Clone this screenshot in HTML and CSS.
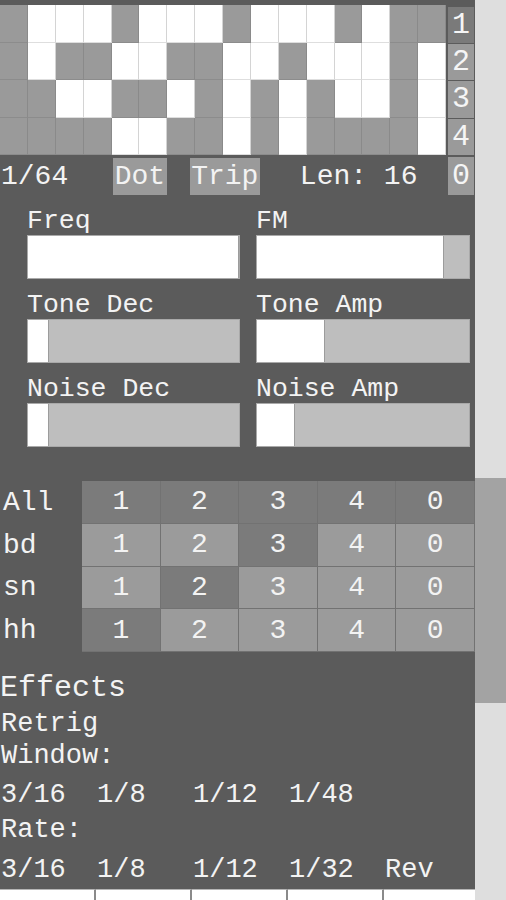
FILE: index.html
```html
<!DOCTYPE html>
<html lang="en">
<head>
<meta charset="utf-8">
<title>Drum Sequencer</title>
<link rel="stylesheet" href="styles.css">
</head>
<body>
<div class="app">
  <main class="page">
    <section class="seq">
      <div class="steps">
        <div class="c"></div><div class="c on"></div><div class="c on"></div><div class="c on"></div><div class="c"></div><div class="c on"></div><div class="c on"></div><div class="c on"></div><div class="c"></div><div class="c on"></div><div class="c on"></div><div class="c on"></div><div class="c"></div><div class="c on"></div><div class="c"></div><div class="c"></div>
        <div class="c"></div><div class="c on"></div><div class="c"></div><div class="c"></div><div class="c on"></div><div class="c on"></div><div class="c"></div><div class="c"></div><div class="c on"></div><div class="c on"></div><div class="c"></div><div class="c on"></div><div class="c on"></div><div class="c on"></div><div class="c"></div><div class="c on"></div>
        <div class="c"></div><div class="c"></div><div class="c on"></div><div class="c on"></div><div class="c"></div><div class="c"></div><div class="c on"></div><div class="c"></div><div class="c on"></div><div class="c"></div><div class="c on"></div><div class="c"></div><div class="c on"></div><div class="c on"></div><div class="c"></div><div class="c on"></div>
        <div class="c"></div><div class="c"></div><div class="c"></div><div class="c"></div><div class="c on"></div><div class="c on"></div><div class="c"></div><div class="c"></div><div class="c on"></div><div class="c"></div><div class="c on"></div><div class="c"></div><div class="c"></div><div class="c"></div><div class="c"></div><div class="c on"></div>
      </div>
      <div class="tracks">
        <div class="tn sel">1</div>
        <div class="tn">2</div>
        <div class="tn">3</div>
        <div class="tn">4</div>
      </div>
    </section>

    <div class="toolbar">
      <div class="tb-main">
        <span class="tb-text res">1/64</span>
        <span class="btn dot">Dot</span>
        <span class="btn trip">Trip</span>
        <span class="tb-text len">Len: 16</span>
      </div>
      <div class="tb-num"><span class="tn">0</span></div>
    </div>

    <section class="sliders">
      <div class="slider">
        <div class="s-label">Freq</div>
        <div class="s-box"><div class="s-fill" style="width:100%"></div></div>
      </div>
      <div class="slider">
        <div class="s-label">FM</div>
        <div class="s-box"><div class="s-fill" style="width:88%"></div></div>
      </div>
      <div class="slider">
        <div class="s-label">Tone Dec</div>
        <div class="s-box"><div class="s-fill" style="width:10%"></div></div>
      </div>
      <div class="slider">
        <div class="s-label">Tone Amp</div>
        <div class="s-box"><div class="s-fill" style="width:32%"></div></div>
      </div>
      <div class="slider">
        <div class="s-label">Noise Dec</div>
        <div class="s-box"><div class="s-fill" style="width:10%"></div></div>
      </div>
      <div class="slider">
        <div class="s-label">Noise Amp</div>
        <div class="s-box"><div class="s-fill" style="width:18%"></div></div>
      </div>
    </section>

    <section class="mixer">
      <div class="m-label">All</div>
      <div class="m d">1</div><div class="m d">2</div><div class="m d">3</div><div class="m d">4</div><div class="m d">0</div>
      <div class="m-label">bd</div>
      <div class="m">1</div><div class="m">2</div><div class="m d">3</div><div class="m">4</div><div class="m">0</div>
      <div class="m-label">sn</div>
      <div class="m">1</div><div class="m d">2</div><div class="m">3</div><div class="m">4</div><div class="m">0</div>
      <div class="m-label">hh</div>
      <div class="m d">1</div><div class="m">2</div><div class="m">3</div><div class="m">4</div><div class="m">0</div>
    </section>

    <section class="effects">
      <div class="fx-title">Effects</div>
      <div class="fx-line retrig">Retrig</div>
      <div class="fx-line window">Window:</div>
      <div class="opts">
        <span class="opt">3/16</span><span class="opt">1/8</span><span class="opt">1/12</span><span class="opt">1/48</span>
      </div>
      <div class="fx-line rate">Rate:</div>
      <div class="opts">
        <span class="opt">3/16</span><span class="opt">1/8</span><span class="opt">1/12</span><span class="opt">1/32</span><span class="opt">Rev</span>
      </div>
      <div class="boxes">
        <div class="bx"></div><div class="bx"></div><div class="bx"></div><div class="bx"></div><div class="bx"></div>
      </div>
    </section>
  </main>
  <div class="scrollbar"><div class="thumb"></div></div>
</div>
</body>
</html>
```

FILE: styles.css
```css
html, body {
  margin: 0;
  padding: 0;
  height: 900px;
  overflow: hidden;
  background: #5b5b5b;
}

body {
  font-family: "Liberation Mono", "DejaVu Sans Mono", monospace;
  color: #f3f3f3;
}

.app {
  display: flex;
  width: 506px;
  height: 900px;
}

.page {
  width: 475px;
  flex: 0 0 475px;
  height: 900px;
  overflow: hidden;
  background: #5b5b5b;
}

/* sequencer grid */
.seq {
  display: flex;
  padding-top: 5px;
}

.steps {
  width: 446px;
  display: grid;
  grid-template-columns: repeat(16, 1fr);
  grid-template-rows: repeat(4, 37.5px);
}

.c {
  background: #9a9a9a;
  border-right: 1px solid #8a8a8a;
  border-bottom: 1px solid #8c8c8c;
}

.c.on {
  background: #ffffff;
  border-right-color: #d4d4d4;
  border-bottom-color: #dedede;
}

.tracks {
  width: 29px;
  display: grid;
  grid-template-rows: repeat(4, 37.5px);
}

.tn {
  display: flex;
  align-items: center;
  justify-content: center;
  margin: 1px 1px 0 2px;
  background: #9a9a9a;
  font-size: 30px;
  color: #f5f5f5;
}

.tn.sel {
  background: #7a7a7a;
  margin-top: 2px;
}

/* toolbar */
.toolbar {
  display: flex;
  height: 42px;
}

.tb-main {
  width: 446px;
  display: flex;
  align-items: center;
  font-size: 28px;
}

.tb-text {
  line-height: 37px;
}

.res {
  margin-left: 1px;
}

.btn {
  background: #9a9a9a;
  line-height: 37px;
  height: 37px;
  padding: 0 1.5px;
}

.dot {
  margin-left: 45px;
}

.trip {
  margin-left: 23px;
}

.len {
  margin-left: 40px;
}

.tb-num {
  width: 29px;
  display: flex;
  padding: 2px 0 2px 0;
  box-sizing: border-box;
}

.tb-num .tn {
  flex: 1;
  margin: 0 1px 0 2px;
}

/* sliders */
.sliders {
  display: grid;
  grid-template-columns: 213px 214px;
  column-gap: 16px;
  row-gap: 13px;
  padding: 10.5px 5px 0 27px;
}

.s-label {
  font-size: 26.5px;
  line-height: 27px;
  height: 27px;
  white-space: nowrap;
}

.s-box {
  height: 44px;
  box-sizing: border-box;
  background: #bebebe;
  border: 1px solid #a9a9a9;
  display: flex;
}

.s-fill {
  background: #ffffff;
  height: 100%;
  box-sizing: border-box;
  border-right: 1px solid #9c9c9c;
}

/* mixer */
.mixer {
  margin-top: 34.5px;
  display: grid;
  grid-template-columns: 82px repeat(5, 1fr);
  grid-template-rows: repeat(4, 42.75px);
  font-size: 28px;
}

.m-label {
  display: flex;
  align-items: center;
  padding-left: 3px;
}

.m {
  display: flex;
  align-items: center;
  justify-content: center;
  background: #9b9b9b;
  border-right: 1px solid #727272;
  border-bottom: 1px solid #727272;
}

.m.d {
  background: #7b7b7b;
}

/* effects */
.effects {
  margin-top: 16px;
  font-size: 27px;
}

.fx-title {
  font-size: 30px;
  line-height: 40px;
}

.fx-line {
  line-height: 33px;
  padding-left: 1px;
}

.fx-line.window {
  line-height: 31px;
}

.opts {
  display: flex;
  margin-top: 4px;
  line-height: 38px;
}

.opt {
  width: 96px;
  flex: 0 0 96px;
  padding-left: 1px;
  box-sizing: border-box;
}

.boxes {
  display: flex;
}

.bx {
  flex: 0 0 96px;
  height: 30px;
  box-sizing: border-box;
  background: #ffffff;
  border-top: 1px solid #b5b5b5;
  border-right: 2px solid #8a8a8a;
}

/* scrollbar */
.scrollbar {
  flex: 0 0 31px;
  height: 900px;
  background: #dedede;
}

.thumb {
  margin-top: 478px;
  height: 225px;
  background: #a3a3a3;
}
```
